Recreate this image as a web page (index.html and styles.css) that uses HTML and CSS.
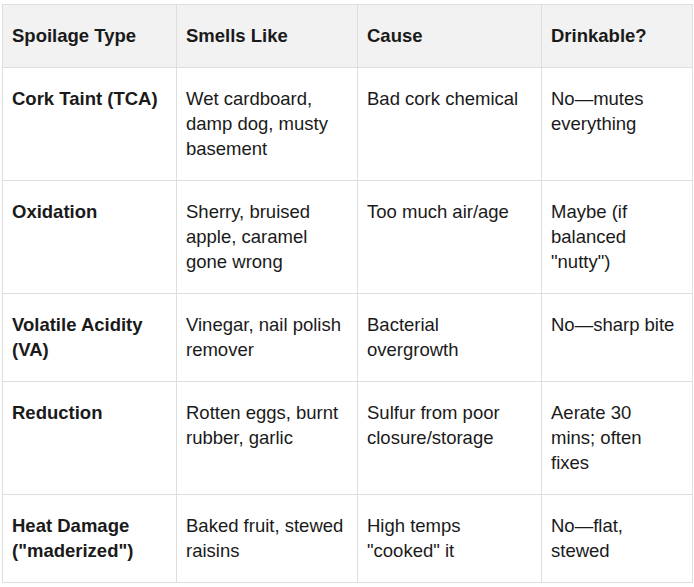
FILE: index.html
```html
<!DOCTYPE html>
<html>
<head>
<meta charset="utf-8">
<link rel="stylesheet" href="styles.css">
</head>
<body>
<div class="wrap">
<table class="spoil">
  <colgroup>
    <col class="c1"><col class="c2"><col class="c3"><col class="c4">
  </colgroup>
  <thead>
    <tr><th>Spoilage Type</th><th>Smells Like</th><th>Cause</th><th>Drinkable?</th></tr>
  </thead>
  <tbody>
    <tr><td class="name">Cork Taint (TCA)</td><td>Wet cardboard, damp dog, musty basement</td><td>Bad cork chemical</td><td>No—mutes everything</td></tr>
    <tr><td class="name">Oxidation</td><td>Sherry, bruised apple, caramel gone wrong</td><td>Too much air/age</td><td>Maybe (if balanced "nutty")</td></tr>
    <tr><td class="name">Volatile Acidity (VA)</td><td>Vinegar, nail polish remover</td><td>Bacterial overgrowth</td><td>No—sharp bite</td></tr>
    <tr><td class="name">Reduction</td><td>Rotten eggs, burnt rubber, garlic</td><td>Sulfur from poor closure/storage</td><td>Aerate 30 mins; often fixes</td></tr>
    <tr><td class="name">Heat Damage ("maderized")</td><td>Baked fruit, stewed raisins</td><td>High temps "cooked" it</td><td>No—flat, stewed</td></tr>
  </tbody>
</table>
</div>
</body>
</html>
```
FILE: styles.css
```css
html, body {
  margin: 0;
  padding: 0;
  background: #ffffff;
}
.wrap {
  padding: 4px 0 0 2px;
}
.spoil {
  border-collapse: collapse;
  table-layout: fixed;
  width: 690px;
  font-family: "Liberation Sans", Arial, sans-serif;
  font-size: 18.5px;
  line-height: 25px;
  color: #1a1a1a;
}
.c1 { width: 174px; }
.c2 { width: 181px; }
.c3 { width: 184px; }
.c4 { width: 151px; }
.spoil th,
.spoil td {
  border: 1px solid #dedede;
  padding: 18px 10px 19px 9px;
  text-align: left;
  vertical-align: top;
}
.spoil th:last-child,
.spoil td:last-child {
  padding-right: 14px;
}
.spoil th {
  background: #f2f2f2;
  font-weight: bold;
}
.spoil td.name {
  font-weight: bold;
}
```
